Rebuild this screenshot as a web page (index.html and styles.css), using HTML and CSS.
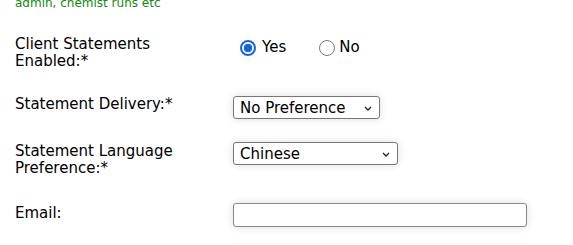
FILE: index.html
```html
<!DOCTYPE html>
<html>
<head>
<meta charset="utf-8">
<link rel="stylesheet" href="styles.css">
</head>
<body>
<div class="page">
  <div class="hint">admin, chemist runs etc</div>
  <div class="form">
    <div class="label">Client Statements<br>Enabled:*</div>
    <div class="radios">
      <label class="radio-opt"><input type="radio" name="cs" class="radio checked" checked><span>Yes</span></label>
      <label class="radio-opt no"><input type="radio" name="cs" class="radio"><span>No</span></label>
    </div>

    <div class="label">Statement Delivery:*</div>
    <div class="field">
      <div class="select-wrap narrow">
        <select class="select"><option>No Preference</option></select>
        <svg class="chev" width="8" height="5" viewBox="0 0 8 5"><path d="M1 1 L4 4 L7 1" fill="none" stroke="#222" stroke-width="1.3"/></svg>
      </div>
    </div>

    <div class="label l3">Statement Language<br>Preference:*</div>
    <div class="field">
      <div class="select-wrap wide">
        <select class="select"><option>Chinese</option></select>
        <svg class="chev" width="8" height="5" viewBox="0 0 8 5"><path d="M1 1 L4 4 L7 1" fill="none" stroke="#222" stroke-width="1.3"/></svg>
      </div>
    </div>

    <div class="label l4">Email:</div>
    <div class="field"><input class="text email" type="text"></div>

    <div class="label"></div>
    <div class="field"><input class="text" type="text"></div>
  </div>
</div>
</body>
</html>
```

FILE: styles.css
```css
html, body {
  margin: 0;
  padding: 0;
  background: #fff;
  overflow: hidden;
}
body {
  font-family: "DejaVu Sans", "Liberation Sans", sans-serif;
  color: #000;
}
.page {
  padding-left: 15px;
}
.hint {
  margin-top: -4px;
  font-size: 12px;
  line-height: 14px;
  color: #118a11;
}
.form {
  margin-top: 26px;
  display: grid;
  grid-template-columns: 218px 300px;
  grid-template-rows: 34px 20px 34px 20px 24px;
  row-gap: 26px;
  align-items: start;
}
.label {
  font-size: 15px;
  line-height: 17px;
}
.l3 { padding-top: 1px; }
.l4 { padding-top: 3px; }
.radios {
  display: flex;
  align-items: center;
  padding-top: 3px;
  font-size: 15px;
  line-height: 17px;
}
.radio-opt {
  display: flex;
  align-items: center;
}
.radio-opt.no { margin-left: 33px; }
.radio-opt.no .radio { margin-right: 4px; }
.radio {
  appearance: none;
  -webkit-appearance: none;
  box-sizing: border-box;
  width: 16px;
  height: 16px;
  margin: 0 6px 0 7px;
  border-radius: 50%;
  border: 1px solid #7a7a7a;
  background: #fff;
}
.radio-opt.no .radio { margin-left: 0; }
.radio.checked {
  border: 2px solid #1566dc;
  background: radial-gradient(circle, #1566dc 0 4px, #fff 4.6px);
}
.select-wrap {
  position: relative;
  display: inline-block;
}
.select {
  appearance: none;
  -webkit-appearance: none;
  box-sizing: border-box;
  height: 23px;
  border: 1px solid #777;
  border-radius: 3px;
  background: #fff;
  font-family: "DejaVu Sans", "Liberation Sans", sans-serif;
  font-size: 15px;
  color: #000;
  padding: 0 0 0 6px;
  margin: 0;
  box-shadow: 0 0 8px rgba(0, 0, 0, 0.13);
  display: block;
}
.narrow .select { width: 147px; }
.wide .select { width: 165px; }
.chev {
  position: absolute;
  right: 8px;
  top: 10px;
}
.text {
  box-sizing: border-box;
  width: 294px;
  height: 24px;
  border: 1px solid #888;
  border-radius: 3px;
  background: #fff;
  margin: 0;
  padding: 0 4px;
  box-shadow: 0 0 8px rgba(0, 0, 0, 0.13);
  display: block;
}
.email { margin-top: 1px; }
```
